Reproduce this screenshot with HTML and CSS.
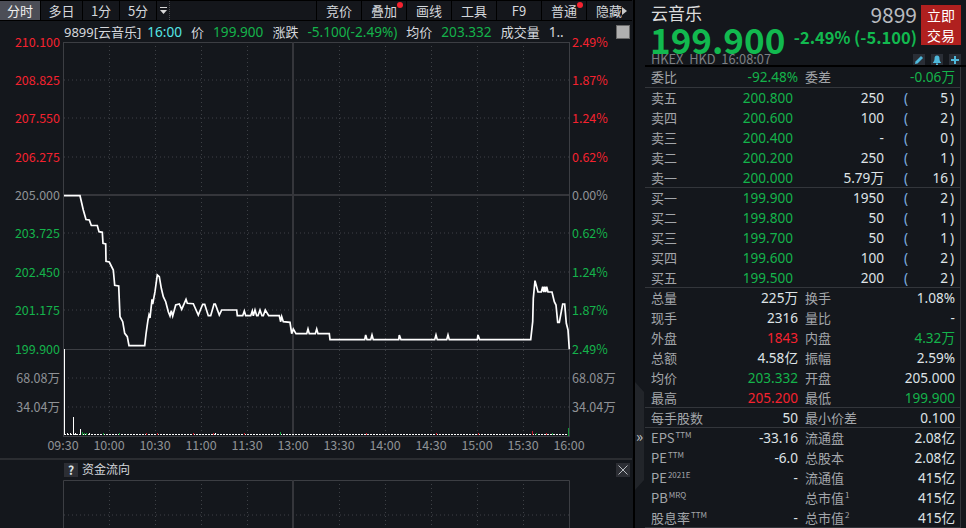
FILE: index.html
```html
<!DOCTYPE html>
<html>

<head>
    <meta charset="UTF-8">
    <title>云音乐 9899</title>
    <link rel="stylesheet" href="styles.css">
</head>

<body>
    <div class="left">
        <!-- period tabs and tools -->
        <div class="toolbar">
            <div class="tab tab-on">分时</div>
            <div class="tab tab-42">多日</div>
            <div class="tab tab-37">1分</div>
            <div class="tab tab-37">5分</div>
            <div class="tab-menu">
                <svg width="9" height="8" viewBox="0 0 9 8">
                    <rect x="1" y="0" width="7" height="1" fill="#d8d8d8"></rect>
                    <path d="M1 3h7L4.5 7z" fill="#d8d8d8"></path>
                </svg>
            </div>
            <div class="tab-space"></div>
            <div class="tab">竞价</div>
            <div class="tab">叠加<span class="dot"></span></div>
            <div class="tab">画线</div>
            <div class="tab">工具</div>
            <div class="tab">F9</div>
            <div class="tab">普通<span class="dot"></span></div>
            <div class="tab tab-hide">隐藏<span class="arrow"></span></div>
        </div>

        <div class="chart">
            <div class="chart-head">
                <span class="light head-code">9899[云音乐]</span>
                <span class="cyan num head-time">16:00</span>
                <span class="light">价</span>
                <span class="green num">199.900</span>
                <span class="light">涨跌</span>
                <span class="green num">-5.100(-2.49%)</span>
                <span class="light">均价</span>
                <span class="green num">203.332</span>
                <span class="light">成交量</span>
                <span class="light num">1..</span>
            </div>
            <div class="check"></div>

            <svg class="plot" width="632" height="437" viewBox="0 21 632 437">
                <g class="dots">
                    <path d="M64 80H569M64 118H569M64 157H569M64 233H569M64 272H569M64 310H569M64 378H569M64 407H569"></path>
                    <path d="M109.500 42V436M155.500 42V436M201.500 42V436M247.500 42V436M339.500 42V436M385.500 42V436M431.500 42V436M477.500 42V436M523.500 42V436"></path>
                </g>
                <rect class="frame" x="63.500" y="42.500" width="506" height="394"></rect>
                <path class="solid" d="M64 195H569M293 42V436"></path>
                <path class="frame" d="M64 349.500H569"></path>

                <polyline class="price" points="64,195.700 80,195.700 83.300,210 86,219.500 89.300,220 91.300,225.500 97.300,225.500 99,231.700 102.300,232.300 103,243.300 105.700,244 106,261.300 109.300,262 113.300,270 114.700,285.300 118.700,286 120,316.700 122.700,321.700 124.700,333.300 127.300,336.700 129,345.700 144.700,345.700 146,334 148,320 149,315 150,318 152,299.300 152.700,304 155,291.700 157.300,275 159.300,276.700 161.300,288.300 163.300,296.700 165.700,301.700 168.300,311.700 170,316 171.300,310.700 172.700,316 175.700,305 179.300,304 181.700,309.300 186,299.300 187.300,303.300 193.300,303.700 198.300,315 202.700,304.300 204.700,304.300 208.300,315.700 210.700,315.700 214,304 215.300,304 219.300,315 221.700,310 236.700,310 237.300,315.700 242.700,315.700 244.300,311 245.700,315.700 250.700,315.700 252.300,311 253.300,315.700 255,310 256.700,315.700 258,315.700 260,310 262,315.700 263.300,315.700 265.300,310 268.700,315.700 279.300,315.700 280.700,321.700 281.700,316.700 283.300,321.700 290,322.300 291.700,333.700 293.300,329 296,333.700 306.700,333.700 308,329 309.300,333.700 315.300,333.700 316.700,329 318,333.700 329.300,333.700 330,339.700 364.700,339.700 365.700,335 367,339.700 370.700,339.700 372,335 373.300,339.700 398.700,339.700 399.300,335 401,339.700 434.700,339.700 436,335 437.300,339.700 446.700,339.700 448,335 449.300,339.700 477.300,339.700 478,335 479.700,339.700 530.700,339.700 532.700,321.700 533.300,298.300 535,280.700 538,292 541.300,292 542.700,286.700 543.700,292 544.700,286.700 545.700,292 546.700,286.700 548,292 552,292 554.300,301.700 556,305 557.700,322.300 559.300,322.300 562.700,304 564.700,304 566.300,323.300 568,330 569.300,349.300"></polyline>

                <!-- volume bars -->
                <path class="base" d="M64 434.500H569"></path>
                <path class="bar" d="M64.500 349V435M73.500 417V435M80.500 429V435M67.500 433V435M70.500 433V435M75.500 433V435M89.500 433V435M215.500 433V435"></path>
                <path class="bar-green" d="M82.500 432V435M84.500 433V435M86.500 433V435M103.500 433V435M119.500 433V435M280.500 432V435M568.500 428V436M536.500 433V435M552.500 433V435"></path>
                <path class="bar-red" d="M146.500 433V435M157.500 433V435M193.500 433V435M213.500 433V435M244.500 433V435M366.500 433V435M436.500 433V435M478.500 433V435M532.500 431V435M546.500 433V435"></path>

                <g class="axis">
                    <text class="up" x="60" y="47" text-anchor="end">210.100</text>
                    <text class="up" x="60" y="85" text-anchor="end">208.825</text>
                    <text class="up" x="60" y="123" text-anchor="end">207.550</text>
                    <text class="up" x="60" y="162" text-anchor="end">206.275</text>
                    <text class="flat" x="60" y="200" text-anchor="end">205.000</text>
                    <text class="down" x="60" y="238" text-anchor="end">203.725</text>
                    <text class="down" x="60" y="277" text-anchor="end">202.450</text>
                    <text class="down" x="60" y="315" text-anchor="end">201.175</text>
                    <text class="down" x="60" y="354" text-anchor="end">199.900</text>
                    <text class="flat" x="60" y="383" text-anchor="end">68.08万</text>
                    <text class="flat" x="60" y="412" text-anchor="end">34.04万</text>

                    <text class="up" x="572" y="47">2.49%</text>
                    <text class="up" x="572" y="85">1.87%</text>
                    <text class="up" x="572" y="123">1.24%</text>
                    <text class="up" x="572" y="162">0.62%</text>
                    <text class="flat" x="572" y="200">0.00%</text>
                    <text class="down" x="572" y="238">0.62%</text>
                    <text class="down" x="572" y="277">1.24%</text>
                    <text class="down" x="572" y="315">1.87%</text>
                    <text class="down" x="572" y="354">2.49%</text>
                    <text class="flat" x="572" y="383">68.08万</text>
                    <text class="flat" x="572" y="412">34.04万</text>

                    <text class="flat" x="63" y="450" text-anchor="middle">09:30</text>
                    <text class="flat" x="109" y="450" text-anchor="middle">10:00</text>
                    <text class="flat" x="155" y="450" text-anchor="middle">10:30</text>
                    <text class="flat" x="201" y="450" text-anchor="middle">11:00</text>
                    <text class="flat" x="247" y="450" text-anchor="middle">11:30</text>
                    <text class="flat" x="293" y="450" text-anchor="middle">13:00</text>
                    <text class="flat" x="339" y="450" text-anchor="middle">13:30</text>
                    <text class="flat" x="385" y="450" text-anchor="middle">14:00</text>
                    <text class="flat" x="431" y="450" text-anchor="middle">14:30</text>
                    <text class="flat" x="477" y="450" text-anchor="middle">15:00</text>
                    <text class="flat" x="523" y="450" text-anchor="middle">15:30</text>
                    <text class="flat" x="569" y="450" text-anchor="middle">16:00</text>
                </g>
            </svg>
        </div>

        <!-- money flow panel -->
        <div class="flow">
            <div class="flow-head">
                <span class="help">?</span>
                <span class="flow-title">资金流向</span>
                <span class="close">
                    <svg width="10" height="10" viewBox="0 0 10 10">
                        <path d="M0.500 0.500L9.500 9.500M9.500 0.500L0.500 9.500" stroke="#b8bcc0" fill="none"></path>
                    </svg>
                </span>
            </div>
            <svg class="plot" width="632" height="48" viewBox="0 480 632 48">
                <g class="dots">
                    <path d="M64 515H569"></path>
                    <path d="M109.500 480V528M155.500 480V528M201.500 480V528M247.500 480V528M339.500 480V528M385.500 480V528M431.500 480V528M477.500 480V528M523.500 480V528"></path>
                </g>
                <path class="frame" d="M63.500 528V480.500H569.500V528"></path>
                <path class="solid" d="M293 480V528"></path>
            </svg>
        </div>
    </div>

    <div class="gutter">
        <div class="handle"><span class="handle-mark">»</span></div>
    </div>

    <div class="panel">
        <div class="quote">
            <div class="quote-main">
                <div class="stock-name">云音乐</div>
                <div class="big-price">199.900</div>
                <div class="market">HKEX&nbsp;&nbsp;HKD&nbsp;&nbsp;16:08:07</div>
            </div>
            <div class="quote-side">
                <div class="side-top">
                    <div class="code">9899</div>
                    <div class="trade">立即<br>交易</div>
                </div>
                <div class="change">-2.49% (-5.100)</div>
                <div class="icons">
                    <span class="icon">
                        <svg width="10" height="10" viewBox="0 0 10 10"><path d="M1 9l0.500-2.500L7 1l2 2-5.500 5.500z" fill="#4fb9dc"></path></svg>
                    </span>
                    <span class="icon">
                        <svg width="10" height="10" viewBox="0 0 10 10"><path d="M5 0.500C3 0.500 2.500 2 2.500 4c0 2-1 3-1.500 3.500V8h8v-0.500C8.500 7 7.500 6 7.500 4c0-2-0.500-3.500-2.500-3.500zM4 8.500h2V10H4z" fill="#4fb9dc"></path></svg>
                    </span>
                    <span class="icon">
                        <svg width="10" height="10" viewBox="0 0 10 10"><path d="M4 1h2v3h3v2H6v3H4V6H1V4h3z" fill="#4fb9dc"></path></svg>
                    </span>
                </div>
            </div>
        </div>

        <div class="table">
            <div class="stat-row">
                <div class="cell"><span class="name">委比</span><span class="green">-92.48%</span></div>
                <div class="cell"><span class="name">委差</span><span class="green">-0.06万</span></div>
            </div>

            <div class="group">
                <div class="book-row"><span class="name">卖五</span><span class="price-cell green">200.800</span><span class="vol">250</span><span class="paren">(</span><span class="count">5</span><span class="paren-end">)</span></div>
                <div class="book-row"><span class="name">卖四</span><span class="price-cell green">200.600</span><span class="vol">100</span><span class="paren">(</span><span class="count">2</span><span class="paren-end">)</span></div>
                <div class="book-row"><span class="name">卖三</span><span class="price-cell green">200.400</span><span class="vol">-</span><span class="paren">(</span><span class="count">0</span><span class="paren-end">)</span></div>
                <div class="book-row"><span class="name">卖二</span><span class="price-cell green">200.200</span><span class="vol">250</span><span class="paren">(</span><span class="count">1</span><span class="paren-end">)</span></div>
                <div class="book-row"><span class="name">卖一</span><span class="price-cell green">200.000</span><span class="vol">5.79万</span><span class="paren">(</span><span class="count">16</span><span class="paren-end">)</span></div>
            </div>

            <div class="group">
                <div class="book-row"><span class="name">买一</span><span class="price-cell green">199.900</span><span class="vol">1950</span><span class="paren">(</span><span class="count">2</span><span class="paren-end">)</span></div>
                <div class="book-row"><span class="name">买二</span><span class="price-cell green">199.800</span><span class="vol">50</span><span class="paren">(</span><span class="count">1</span><span class="paren-end">)</span></div>
                <div class="book-row"><span class="name">买三</span><span class="price-cell green">199.700</span><span class="vol">50</span><span class="paren">(</span><span class="count">1</span><span class="paren-end">)</span></div>
                <div class="book-row"><span class="name">买四</span><span class="price-cell green">199.600</span><span class="vol">100</span><span class="paren">(</span><span class="count">2</span><span class="paren-end">)</span></div>
                <div class="book-row"><span class="name">买五</span><span class="price-cell green">199.500</span><span class="vol">200</span><span class="paren">(</span><span class="count">2</span><span class="paren-end">)</span></div>
            </div>

            <div class="group">
                <div class="stat-row"><div class="cell"><span class="name">总量</span><span>225万</span></div><div class="cell"><span class="name">换手</span><span>1.08%</span></div></div>
                <div class="stat-row"><div class="cell"><span class="name">现手</span><span>2316</span></div><div class="cell"><span class="name">量比</span><span>-</span></div></div>
                <div class="stat-row"><div class="cell"><span class="name">外盘</span><span class="red">1843</span></div><div class="cell"><span class="name">内盘</span><span class="green">4.32万</span></div></div>
                <div class="stat-row"><div class="cell"><span class="name">总额</span><span>4.58亿</span></div><div class="cell"><span class="name">振幅</span><span>2.59%</span></div></div>
                <div class="stat-row"><div class="cell"><span class="name">均价</span><span class="green">203.332</span></div><div class="cell"><span class="name">开盘</span><span>205.000</span></div></div>
                <div class="stat-row"><div class="cell"><span class="name">最高</span><span class="red">205.200</span></div><div class="cell"><span class="name">最低</span><span class="green">199.900</span></div></div>
            </div>

            <div class="group">
                <div class="stat-row"><div class="cell"><span class="name">每手股数</span><span>50</span></div><div class="cell"><span class="name">最小价差</span><span>0.100</span></div></div>
            </div>

            <div class="group">
                <div class="stat-row"><div class="cell"><span class="name">EPS<sup>TTM</sup></span><span>-33.16</span></div><div class="cell"><span class="name">流通盘</span><span>2.08亿</span></div></div>
                <div class="stat-row"><div class="cell"><span class="name">PE<sup>TTM</sup></span><span>-6.0</span></div><div class="cell"><span class="name">总股本</span><span>2.08亿</span></div></div>
                <div class="stat-row"><div class="cell"><span class="name">PE<sup>2021E</sup></span><span>-</span></div><div class="cell"><span class="name">流通值</span><span>415亿</span></div></div>
                <div class="stat-row"><div class="cell"><span class="name">PB<sup>MRQ</sup></span><span></span></div><div class="cell"><span class="name">总市值<sup>1</sup></span><span>415亿</span></div></div>
                <div class="stat-row"><div class="cell"><span class="name">股息率<sup>TTM</sup></span><span>-</span></div><div class="cell"><span class="name">总市值<sup>2</sup></span><span>415亿</span></div></div>
            </div>
        </div>
    </div>
</body>

</html>
```

FILE: styles.css
```css
html,
body {
    margin: 0;
    height: 528px;
    overflow: hidden;
}

body {
    display: flex;
    background-color: #14171c;
    color: #dfe3e6;
    font-family: "Noto Sans CJK SC", "Noto Sans", sans-serif;
    font-size: 13px;
}

.green {
    color: #14b34b;
}

.red {
    color: #f5222f;
}

.cyan {
    color: #55e6e6;
}

.light {
    color: #d4d8dc;
}

.num {
    font-family: "Noto Sans", "Noto Sans CJK SC", sans-serif;
    font-size: 13.600px;
}

/* left side */
.left {
    width: 632px;
    flex: none;
    display: flex;
    flex-direction: column;
}

.toolbar {
    height: 19px;
    display: flex;
    border-top: 1px solid #000;
    border-bottom: 1px solid #000;
    background-color: #14161b;
}

.tab {
    position: relative;
    width: 44px;
    display: flex;
    align-items: center;
    justify-content: center;
    border-right: 1px solid #000;
    color: #d4d8dc;
    line-height: 19px;
}

.tab-on {
    width: 40px;
    background-color: #4c4e57;
    color: #f0f0f0;
}

.tab-42 {
    width: 41px;
}

.tab-37 {
    width: 36px;
}

.tab-menu {
    width: 12px;
    display: flex;
    align-items: center;
    justify-content: center;
    border-right: 1px dotted #4a4c50;
}

.tab-space {
    flex: 1;
    border-right: 1px solid #000;
}

.tab-hide {
    border-right: none;
    justify-content: flex-start;
    padding-left: 9px;
    width: 36px;
}

.dot {
    position: absolute;
    top: 1px;
    right: 3px;
    width: 6px;
    height: 6px;
    border-radius: 50%;
    background-color: #f5222f;
}

.arrow {
    width: 0;
    height: 0;
    border-left: 5px solid #c8c8c8;
    border-top: 4px solid transparent;
    border-bottom: 4px solid transparent;
}

.chart {
    position: relative;
    height: 437px;
}

.chart-head {
    position: absolute;
    left: 64px;
    top: 0;
    height: 21px;
    display: flex;
    align-items: center;
    gap: 9px;
    white-space: nowrap;
}

.head-code {
    font-family: "Noto Sans", "Noto Sans CJK SC", sans-serif;
    font-size: 13px;
}

.head-time {
    margin-left: -3px;
}

.check {
    position: absolute;
    left: 616px;
    top: 4px;
    width: 12px;
    height: 12px;
    background-color: #b0b0b0;
    border: 1px solid #6a6a6a;
}

.plot {
    display: block;
}

.dots {
    stroke: #3e4146;
    stroke-width: 1;
    stroke-dasharray: 1 3;
    fill: none;
}

.frame {
    fill: none;
    stroke: #3c3e43;
    stroke-width: 1;
}

.solid {
    fill: none;
    stroke: #35363b;
    stroke-width: 2;
}

.price {
    fill: none;
    stroke: #fff;
    stroke-width: 1.700;
}

.base {
    fill: none;
    stroke: #fff;
    stroke-dasharray: 2 1;
}

.bar {
    stroke: #fff;
}

.bar-green {
    stroke: #0f9a35;
}

.bar-red {
    stroke: #c01c28;
}

.axis text {
    font-size: 12.500px;
}

.axis .up {
    fill: #f5222f;
}

.axis .down {
    fill: #14b34b;
}

.axis .flat {
    fill: #8f9296;
}

.flow {
    flex: 1;
    border-top: 2px solid #2b2d31;
}

.flow-head {
    height: 20px;
    display: flex;
    align-items: center;
}

.help {
    width: 14px;
    height: 14px;
    margin-left: 64px;
    background-color: #2c2e34;
    color: #dfe3e6;
    font-weight: bold;
    font-size: 12px;
    line-height: 14px;
    text-align: center;
}

.flow-title {
    margin-left: 4px;
    color: #d4d8dc;
    font-size: 12px;
    line-height: 18px;
    margin-top: -2px;
}

.close {
    width: 14px;
    height: 14px;
    margin-left: auto;
    margin-right: 2px;
    background-color: #2c2e34;
    display: flex;
    align-items: center;
    justify-content: center;
}

/* collapse handle between the chart and the quote */
.gutter {
    position: relative;
    width: 13px;
    flex: none;
    box-sizing: border-box;
    border-left: 2px solid #000;
    margin-left: 1px;
    margin-right: -1px;
}

.handle {
    position: absolute;
    left: 0;
    top: 382px;
    width: 9px;
    height: 108px;
    background-color: #22252a;
    clip-path: polygon(0 0, 100% 10px, 100% 98px, 0 100%);
    display: flex;
    align-items: center;
    justify-content: center;
}

.handle-mark {
    color: #c0c4c8;
    font-size: 15px;
    line-height: 12px;
}

/* right side */
.panel {
    width: 321px;
    flex: none;
}

.quote {
    height: 65px;
    width: 316px;
    position: relative;
    display: flex;
    justify-content: space-between;
    padding-left: 6px;
    box-sizing: border-box;
}

.quote::after {
    content: "";
    position: absolute;
    left: 0;
    right: -5px;
    bottom: -2px;
    height: 2px;
    background-color: #000;
}

.stock-name {
    height: 25px;
    font-size: 17px;
    line-height: 25px;
    color: #dcdcdc;
}

.big-price {
    height: 27px;
    margin-left: -1px;
    font-size: 35px;
    font-weight: bold;
    line-height: 27px;
    color: #12b94f;
    white-space: nowrap;
}

.market {
    margin-top: 1px;
    color: #7d8084;
    font-size: 12.800px;
    line-height: 12px;
    white-space: nowrap;
}

.quote-side {
    display: flex;
    flex-direction: column;
    align-items: flex-end;
    padding-top: 5px;
}

.side-top {
    display: flex;
    gap: 4px;
    height: 18px;
}

.code {
    font-size: 21px;
    line-height: 18px;
    color: #b9bcc0;
}

.trade {
    position: relative;
    z-index: 1;
    width: 40px;
    height: 40px;
    background-color: #b0201f;
    color: #fff;
    font-size: 14px;
    line-height: 20px;
    text-align: center;
}

.change {
    width: 168px;
    margin-top: 4px;
    color: #12b94f;
    font-size: 16.500px;
    font-weight: bold;
    line-height: 20px;
    white-space: nowrap;
    padding-right: 44px;
    box-sizing: border-box;
    text-align: right;
}

.icons {
    display: flex;
    gap: 6px;
    margin-top: 7px;
}

.icon {
    width: 12px;
    height: 12px;
    background-color: #2a2e36;
    display: flex;
    align-items: center;
    justify-content: center;
}

.table {
    width: 316px;
    height: 461px;
    margin-top: 2px;
    box-sizing: border-box;
    border-right: 1px solid #33363b;
    font-size: 13px;
    color: #dfe3e6;
}

.group {
    border-top: 1px solid #33363b;
    margin-top: -1px;
}

.stat-row + .group {
    margin-top: 0;
}

.group:last-child {
    box-shadow: inset 0 -1px 0 #33363b;
}

.stat-row {
    height: 20px;
    display: grid;
    grid-template-columns: 147px 150px;
    column-gap: 7px;
    padding-left: 6px;
    line-height: 20px;
}

.cell {
    display: flex;
    justify-content: space-between;
    white-space: nowrap;
}

.cell > span:last-child,
.book-row > span:not(.name) {
    font-family: "Noto Sans", "Noto Sans CJK SC", sans-serif;
    font-size: 13.600px;
}

.name {
    color: #a3a6aa;
}

.cell > .name {
    font-size: 13px;
}

.name sup {
    font-size: 8px;
    line-height: 8px;
    vertical-align: 5px;
    margin-left: 1px;
}

.book-row {
    height: 20px;
    display: grid;
    grid-template-columns: 50px 92px 91px 24px 40px 13px;
    padding-left: 6px;
    line-height: 20px;
    white-space: nowrap;
}

.price-cell,
.vol,
.paren,
.count {
    text-align: right;
}

.book-row > .paren {
    color: #7fb0e0;
}

.paren-end {
    padding-left: 2px;
}
```
